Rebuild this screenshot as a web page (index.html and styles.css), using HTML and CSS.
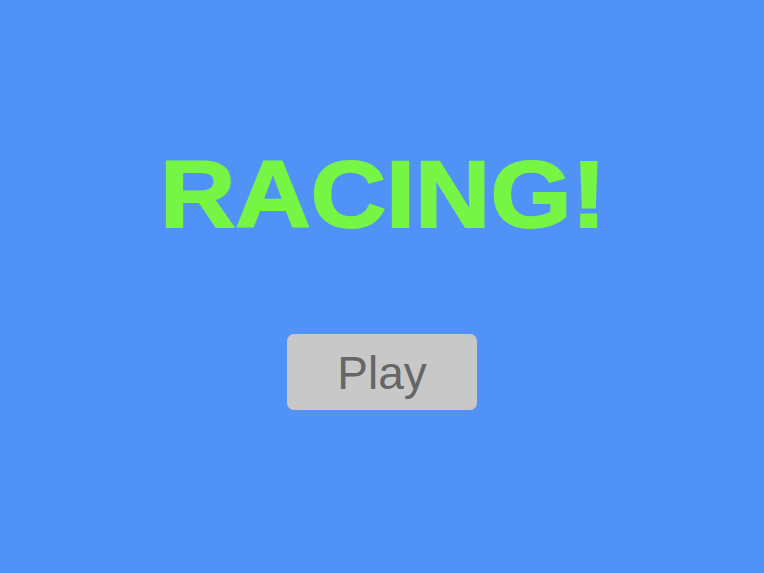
FILE: index.html
```html
<!DOCTYPE html>
<html>
<head>
<meta charset="utf-8">
<link rel="stylesheet" href="styles.css">
</head>
<body>
<main class="screen">
  <h1 class="title">RACING!</h1>
  <button class="play">Play</button>
</main>
</body>
</html>
```
FILE: styles.css
```css
html, body {
  margin: 0;
  padding: 0;
  width: 764px;
  height: 573px;
  overflow: hidden;
  background: #5092f6;
}
.screen {
  display: flex;
  flex-direction: column;
  align-items: center;
  width: 764px;
  height: 573px;
  font-family: "Liberation Sans", Arial, sans-serif;
}
.title {
  margin: 143px 0 0 0;
  font-size: 94px;
  line-height: 104px;
  font-weight: bold;
  color: #76f545;
  -webkit-text-stroke: 2px #76f545;
  letter-spacing: 0;
  transform: scaleX(1.11);
  padding-left: 2px;
}
.play {
  margin-top: 87px;
  width: 190px;
  height: 76px;
  border: none;
  border-radius: 7px;
  background: #c8c8c8;
  color: #666666;
  font-family: "Liberation Sans", Arial, sans-serif;
  font-size: 46px;
  padding: 2px 0 0 0;
}
```
